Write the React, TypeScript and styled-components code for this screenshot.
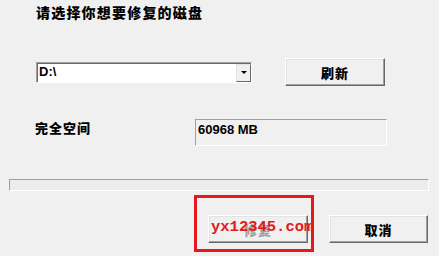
import styled, { createGlobalStyle } from 'styled-components';

const GlobalStyle = createGlobalStyle`
  html, body {
    margin: 0;
    padding: 0;
    background: #f0f0f0;
  }
  body {
    width: 439px;
    height: 256px;
    overflow: hidden;
    font-family: 'Noto Sans CJK SC', 'Liberation Sans', sans-serif;
  }
`;

const Window = styled.div`
  position: relative;
  width: 439px;
  height: 256px;
  background: #f0f0f0;
  display: flex;
  flex-direction: column;
`;

const Title = styled.div`
  margin: 3px 0 0 36px;
  height: 18px;
  font-size: 14px;
  line-height: 18px;
  font-weight: 900;
  color: #000;
  letter-spacing: 1.2px;
`;

const Row = styled.div<{ $top: number }>`
  display: flex;
  align-items: center;
  margin-top: ${(p) => p.$top}px;
`;

const Combo = styled.div`
  margin-left: 36px;
  width: 216px;
  height: 21px;
  box-sizing: border-box;
  background: #fff;
  border-top: 1px solid #a0a0a0;
  border-left: 1px solid #a0a0a0;
  border-right: 1px solid #fff;
  border-bottom: 1px solid #fff;
  box-shadow: inset 1px 1px 0 #696969;
  display: flex;
  align-items: stretch;
`;

const ComboText = styled.div`
  flex: 1;
  padding-left: 2px;
  font-family: 'Liberation Sans', sans-serif;
  font-size: 13px;
  font-weight: 700;
  line-height: 18px;
  color: #000;
`;

const ComboArrow = styled.div`
  width: 15px;
  margin: 1px 0 0 0;
  box-sizing: border-box;
  background: #f0f0f0;
  border-top: 1px solid #e3e3e3;
  border-left: 1px solid #e3e3e3;
  border-right: 1px solid #696969;
  border-bottom: 1px solid #696969;
  display: flex;
  align-items: center;
  justify-content: center;
  &::after {
    content: '';
    border-left: 3px solid transparent;
    border-right: 3px solid transparent;
    border-top: 3px solid #000;
  }
`;

const Button = styled.div<{ $left: number; $width: number; $disabled?: boolean }>`
  margin-left: ${(p) => p.$left}px;
  width: ${(p) => p.$width}px;
  height: 28px;
  box-sizing: border-box;
  background: #f0f0f0;
  border-top: 1px solid #fff;
  border-left: 1px solid #fff;
  border-right: 1px solid #696969;
  border-bottom: 1px solid #696969;
  box-shadow: inset -1px -1px 0 #a0a0a0, inset 1px 1px 0 #e3e3e3;
  display: flex;
  align-items: center;
  justify-content: center;
  font-size: 13px;
  font-weight: 900;
  letter-spacing: 1px;
  color: ${(p) => (p.$disabled ? '#a0a0a0' : '#000')};
`;

const Label = styled.div`
  margin-left: 35px;
  width: 160px;
  align-self: flex-start;
  margin-top: 1px;
  font-size: 13px;
  font-weight: 900;
  line-height: 16px;
  letter-spacing: 1px;
  color: #000;
`;

const ReadBox = styled.div`
  width: 192px;
  height: 27px;
  box-sizing: border-box;
  background: #f0f0f0;
  border-top: 1px solid #a0a0a0;
  border-left: 1px solid #a0a0a0;
  border-right: 1px solid #fff;
  border-bottom: 1px solid #fff;
  padding: 2px 0 0 2px;
  font-family: 'Liberation Sans', sans-serif;
  font-size: 13px;
  font-weight: 700;
  line-height: 15px;
  color: #000;
`;

const Progress = styled.div`
  margin: 33px 0 0 9px;
  width: 420px;
  height: 12px;
  box-sizing: border-box;
  background: #ececec;
  border-top: 1px solid #a0a0a0;
  border-left: 1px solid #a0a0a0;
  border-right: 1px solid #fff;
  border-bottom: 1px solid #fff;
`;

const Watermark = styled.div`
  position: absolute;
  left: 194px;
  top: 195px;
  width: 120px;
  height: 57px;
  box-sizing: border-box;
  border: 3px solid #e3191b;
  display: flex;
  align-items: center;
  justify-content: flex-start;
  padding: 6px 0 0 14px;
  overflow: hidden;
`;

const WatermarkText = styled.span`
  font-family: 'Liberation Mono', monospace;
  font-size: 15.5px;
  font-weight: 700;
  white-space: nowrap;
  color: #e3191b;
`;

export default function App() {
  return (
    <>
      <GlobalStyle />
      <Window>
        <Title>请选择你想要修复的磁盘</Title>
        <Row $top={37}>
          <Combo>
            <ComboText>D:\</ComboText>
            <ComboArrow />
          </Combo>
          <Button $left={33} $width={100}>刷新</Button>
        </Row>
        <Row $top={33}>
          <Label>完全空间</Label>
          <ReadBox>60968 MB</ReadBox>
        </Row>
        <Progress />
        <Row $top={24}>
          <Button $left={208} $width={100} $disabled>修复</Button>
          <Button $left={21} $width={99}>取消</Button>
        </Row>
        <Watermark>
          <WatermarkText>yx12345.com</WatermarkText>
        </Watermark>
      </Window>
    </>
  );
}
